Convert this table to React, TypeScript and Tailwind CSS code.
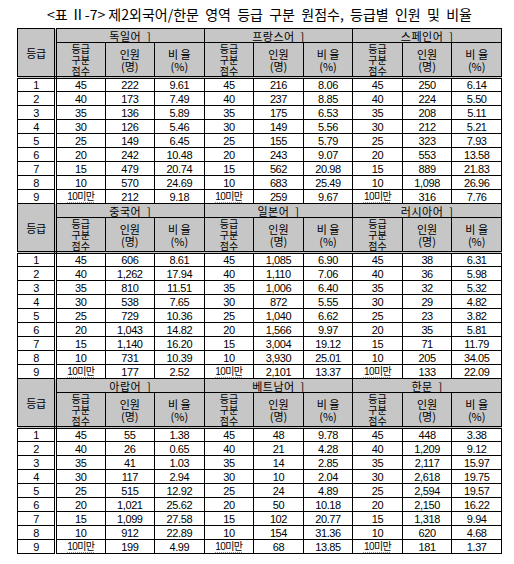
import React from "react";

type Row = [string, string, string];
type Group = { name: string; rows: Row[] };

const sections: Group[][] = [
  [
    {
      name: "독일어  ]",
      rows: [
        ["45", "222", "9.61"],
        ["40", "173", "7.49"],
        ["35", "136", "5.89"],
        ["30", "126", "5.46"],
        ["25", "149", "6.45"],
        ["20", "242", "10.48"],
        ["15", "479", "20.74"],
        ["10", "570", "24.69"],
        ["10미만", "212", "9.18"],
      ],
    },
    {
      name: "프랑스어  ]",
      rows: [
        ["45", "216", "8.06"],
        ["40", "237", "8.85"],
        ["35", "175", "6.53"],
        ["30", "149", "5.56"],
        ["25", "155", "5.79"],
        ["20", "243", "9.07"],
        ["15", "562", "20.98"],
        ["10", "683", "25.49"],
        ["10미만", "259", "9.67"],
      ],
    },
    {
      name: "스페인어  ]",
      rows: [
        ["45", "250", "6.14"],
        ["40", "224", "5.50"],
        ["35", "208", "5.11"],
        ["30", "212", "5.21"],
        ["25", "323", "7.93"],
        ["20", "553", "13.58"],
        ["15", "889", "21.83"],
        ["10", "1,098", "26.96"],
        ["10미만", "316", "7.76"],
      ],
    },
  ],
  [
    {
      name: "중국어  ]",
      rows: [
        ["45", "606", "8.61"],
        ["40", "1,262", "17.94"],
        ["35", "810", "11.51"],
        ["30", "538", "7.65"],
        ["25", "729", "10.36"],
        ["20", "1,043", "14.82"],
        ["15", "1,140", "16.20"],
        ["10", "731", "10.39"],
        ["10미만", "177", "2.52"],
      ],
    },
    {
      name: "일본어  ]",
      rows: [
        ["45", "1,085", "6.90"],
        ["40", "1,110", "7.06"],
        ["35", "1,006", "6.40"],
        ["30", "872", "5.55"],
        ["25", "1,040", "6.62"],
        ["20", "1,566", "9.97"],
        ["15", "3,004", "19.12"],
        ["10", "3,930", "25.01"],
        ["10미만", "2,101", "13.37"],
      ],
    },
    {
      name: "러시아어  ]",
      rows: [
        ["45", "38", "6.31"],
        ["40", "36", "5.98"],
        ["35", "32", "5.32"],
        ["30", "29", "4.82"],
        ["25", "23", "3.82"],
        ["20", "35", "5.81"],
        ["15", "71", "11.79"],
        ["10", "205", "34.05"],
        ["10미만", "133", "22.09"],
      ],
    },
  ],
  [
    {
      name: "아랍어  ]",
      rows: [
        ["45", "55", "1.38"],
        ["40", "26", "0.65"],
        ["35", "41", "1.03"],
        ["30", "117", "2.94"],
        ["25", "515", "12.92"],
        ["20", "1,021", "25.62"],
        ["15", "1,099", "27.58"],
        ["10", "912", "22.89"],
        ["10미만", "199", "4.99"],
      ],
    },
    {
      name: "베트남어  ]",
      rows: [
        ["45", "48", "9.78"],
        ["40", "21", "4.28"],
        ["35", "14", "2.85"],
        ["30", "10", "2.04"],
        ["25", "24", "4.89"],
        ["20", "50", "10.18"],
        ["15", "102", "20.77"],
        ["10", "154", "31.36"],
        ["10미만", "68", "13.85"],
      ],
    },
    {
      name: "한문  ]",
      rows: [
        ["45", "448", "3.38"],
        ["40", "1,209", "9.12"],
        ["35", "2,117", "15.97"],
        ["30", "2,618", "19.75"],
        ["25", "2,594", "19.57"],
        ["20", "2,150", "16.22"],
        ["15", "1,318", "9.94"],
        ["10", "620", "4.68"],
        ["10미만", "181", "1.37"],
      ],
    },
  ],
];

const FONT = {
  fontFamily: '"Liberation Sans", "Noto Sans CJK KR", sans-serif',
};
const KR = { fontFamily: '"Noto Sans CJK KR", sans-serif' };

function Cell({ v }: { v: string }) {
  if (v === "10미만") {
    return (
      <td className="border border-black p-0 text-center">
        <span
          className="text-[10px] tracking-[-0.6px] underline decoration-dotted decoration-[#d9822b] underline-offset-[2px]"
        >
          10미만
        </span>
      </td>
    );
  }
  return <td className="border border-black p-0 text-center">{v}</td>;
}

function Section({ groups }: { groups: Group[] }) {
  return (
    <>
      <tr className="h-[14px] bg-[#c6c6c6]">
        <td
          rowSpan={2}
          className="border border-black border-r-[3px] border-b-[3px] p-0 text-center text-[11px]"
          style={{ ...KR, borderRightStyle: "double", borderBottomStyle: "double" }}
        >
          등급
        </td>
        {groups.map((g) => (
          <td
            key={g.name}
            colSpan={3}
            className="border border-black p-0 text-center text-[11px] whitespace-pre tracking-[0.5px]"
            style={KR}
          >
            {g.name}
          </td>
        ))}
      </tr>
      <tr className="h-[34px] bg-[#c6c6c6]">
        {groups.map((g) => (
          <React.Fragment key={g.name}>
            <td
              className="border border-black border-b-[3px] p-0 text-center align-middle text-[10px] leading-[11px] tracking-normal"
              style={{ ...KR, borderBottomStyle: "double" }}
            >
              <div className="flex flex-col items-center">
                <span className="h-[11px] leading-[11px]">등급</span>
                <span className="h-[11px] leading-[11px]">구분</span>
                <span className="h-[11px] leading-[11px]">점수</span>
              </div>
            </td>
            <td
              className="border border-black border-b-[3px] p-0 text-center align-middle text-[11px] leading-[12px] tracking-normal"
              style={{ ...KR, borderBottomStyle: "double" }}
            >
              인원
              <br />
              (명)
            </td>
            <td
              className="border border-black border-b-[3px] p-0 text-center align-middle text-[11px] leading-[12px] tracking-normal whitespace-pre"
              style={{ ...KR, borderBottomStyle: "double" }}
            >
              {"비 율"}
              <br />
              (%)
            </td>
          </React.Fragment>
        ))}
      </tr>
      {Array.from({ length: 9 }).map((_, i) => (
        <tr key={i} className="h-[14px] bg-white">
          <td
            className="border border-black border-r-[3px] p-0 text-center"
            style={{ borderRightStyle: "double" }}
          >
            {i + 1}
          </td>
          {groups.map((g) => (
            <React.Fragment key={g.name}>
              <Cell v={g.rows[i][0]} />
              <Cell v={g.rows[i][1]} />
              <Cell v={g.rows[i][2]} />
            </React.Fragment>
          ))}
        </tr>
      ))}
    </>
  );
}

export default function App() {
  return (
    <div className="w-[514px] h-[564px] bg-white text-black" style={FONT}>
      <div className="pt-[6px] pl-[17px] w-[502px]">
        <div
          className="text-center text-[14px] leading-[16px] whitespace-pre"
          style={KR}
        >
          {"<표 Ⅱ-7> 제2외국어/한문  영역  등급  구분  원점수,  등급별  인원  및  비율"}
        </div>
        <table className="mt-[6px] w-[485px] table-fixed border-collapse text-[11px] leading-[12px] tracking-[-0.4px]">
          <colgroup>
            <col className="w-[38px]" />
            {Array.from({ length: 9 }).map((_, i) => (
              <col key={i} />
            ))}
          </colgroup>
          <tbody>
            {sections.map((s, i) => (
              <Section key={i} groups={s} />
            ))}
          </tbody>
        </table>
      </div>
    </div>
  );
}
